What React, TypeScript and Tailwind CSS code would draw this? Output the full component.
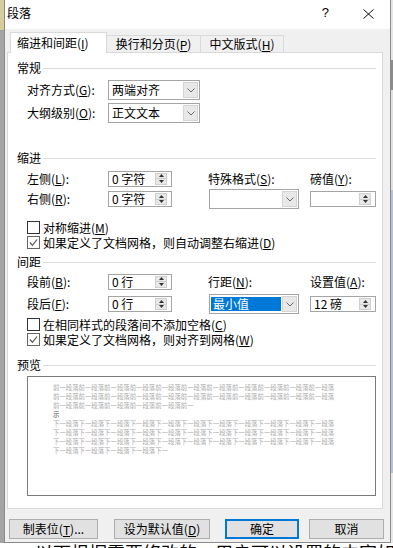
import React from "react";

const U = ({ k }: { k: string }) => (
  <>
    (<span className="underline inline-block leading-[13px]">{k}</span>)
  </>
);

function Chevron() {
  return (
    <svg width="8" height="5" viewBox="0 0 8 5">
      <polyline points="0.5,0.5 4,4 7.5,0.5" fill="none" stroke="#6a6a6a" strokeWidth="1" />
    </svg>
  );
}

function Header({ text, cls }: { text: string; cls: string }) {
  return (
    <div className={"flex items-center h-[14px] pl-[9px] pr-[6px] " + cls}>
      <span className="text-[12px] leading-[14px]">{text}</span>
      <div className="flex-1 h-px bg-[#dcdcdc] ml-[2px]" />
    </div>
  );
}

function Select({ w, value, highlight }: { w: string; value?: string; highlight?: boolean }) {
  return (
    <div className={w + " h-[20px] border border-[#a5a5a5] bg-white flex items-stretch"}>
      <div className="flex-1 flex items-center pl-[1px] pr-[1px]">
        {highlight ? (
          <div className="w-full h-[14px] bg-[#0078d7] text-white text-[12px] leading-[14px] pl-[2px]">{value}</div>
        ) : (
          <span className="text-[12px] leading-[14px] pl-[2px]">{value}</span>
        )}
      </div>
      <div className="w-[15px] my-[1px] mr-[1px] bg-[#e8e8e8] border border-[#d4d4d4] flex items-center justify-center">
        <Chevron />
      </div>
    </div>
  );
}

function Spin({ w, value }: { w: string; value?: string }) {
  return (
    <div className={w + " h-[16px] border border-[#a5a5a5] bg-white flex items-stretch"}>
      <div className="flex-1 flex items-center pl-[3px] text-[12px] leading-[14px] whitespace-pre">{value}</div>
      <div className="w-[12px] my-[1px] mr-[4px] flex flex-col bg-[#e8e8e8] border border-[#cfcfcf]">
        <div className="flex-1 flex items-center justify-center border-b border-[#cfcfcf]">
          <svg width="5" height="3" viewBox="0 0 5 3">
            <polygon points="0,3 2.5,0 5,3" fill="#333" />
          </svg>
        </div>
        <div className="flex-1 flex items-center justify-center">
          <svg width="5" height="3" viewBox="0 0 5 3">
            <polygon points="0,0 5,0 2.5,3" fill="#333" />
          </svg>
        </div>
      </div>
    </div>
  );
}

function CB({ checked, cls, children }: { checked?: boolean; cls: string; children: React.ReactNode }) {
  return (
    <div className={"flex items-center h-[13px] pl-[19px] " + cls}>
      <div
        className={
          "w-[13px] h-[13px] border bg-white flex items-center justify-center " +
          (checked ? "border-[#666666]" : "border-[#333333]")
        }
      >
        {checked && (
          <svg width="9" height="9" viewBox="0 0 9 9">
            <polyline points="1,4.5 3.5,7.3 8,1.5" fill="none" stroke="#555" strokeWidth="1.2" />
          </svg>
        )}
      </div>
      <span className="ml-[3px] inline-block h-[13px] text-[12px] leading-[13px] whitespace-nowrap">{children}</span>
    </div>
  );
}

function Label({ w, children }: { w: string; children: React.ReactNode }) {
  return <div className={w + " text-[12px] leading-[14px] whitespace-nowrap"}>{children}</div>;
}

const prev = "前一段落".repeat(40);
const next = "下一段落".repeat(40);
const prevLines = [prev.slice(0, 44), prev.slice(44, 88), prev.slice(88, 110)];
const nextLines = [next.slice(0, 44), next.slice(44, 88), next.slice(88, 132), next.slice(132, 150)];

export default function App() {
  return (
    <div className="w-[393px] h-[548px] overflow-hidden flex flex-col bg-white text-black font-['Noto_Sans_CJK_SC',sans-serif]">
      <div className="flex h-[543px]">
        <div className="w-[4px] flex flex-col">
          <div className="h-[30px] bg-[#d6cc9c]" />
          <div className="flex-1 bg-[#a4a4a4]" />
        </div>
        <div className="w-[387px] border-x border-b border-[#8a8a8a] bg-[#f0f0f0] flex flex-col">
          {/* title bar */}
          <div className="h-[29px] bg-white flex items-start pl-[2px] pt-[5px]">
            <span className="text-[12px] leading-[16px]">段落</span>
            <div className="flex-1" />
            <span className="font-['Liberation_Sans',sans-serif] text-[13px] leading-[16px] mr-[34px]">?</span>
            <div className="mt-[4px] mr-[16px]">
              <svg width="11" height="10" viewBox="0 0 11 10">
                <line x1="0.5" y1="0.5" x2="10.5" y2="9.5" stroke="#111" strokeWidth="1" />
                <line x1="10.5" y1="0.5" x2="0.5" y2="9.5" stroke="#111" strokeWidth="1" />
              </svg>
            </div>
          </div>
          {/* tabs */}
          <div className="h-[23px] flex items-end pl-[5px]">
            <div className="relative z-10 -mb-px w-[97px] h-[21px] bg-white border-t border-x border-[#d9d9d9] flex items-center pl-[6px] text-[12px] leading-[14px]">
              缩进和间距<U k="I" />
            </div>
            <div className="w-[94px] h-[17px] border-t border-r border-[#d9d9d9] flex items-center justify-center text-[12px] leading-[14px]">
              换行和分页<U k="P" />
            </div>
            <div className="w-[83px] h-[17px] border-t border-r border-[#d9d9d9] flex items-center justify-center text-[12px] leading-[14px]">
              中文版式<U k="H" />
            </div>
          </div>
          {/* panel */}
          <div className="ml-[2px] w-[376px] h-[457px] bg-white border border-[#d9d9d9] flex flex-col">
            <Header text="常规" cls="mt-[8px]" />
            <div className="flex items-center h-[20px] pl-[19px] mt-[5px]">
              <Label w="w-[81px]">
                对齐方式<U k="G" />:
              </Label>
              <Select w="w-[92px]" value="两端对齐" />
            </div>
            <div className="flex items-center h-[20px] pl-[19px] mt-[3px]">
              <Label w="w-[81px]">
                大纲级别<U k="O" />:
              </Label>
              <Select w="w-[92px]" value="正文文本" />
            </div>

            <Header text="缩进" cls="mt-[28px]" />
            <div className="flex items-center h-[17px] pl-[19px] mt-[5px]">
              <Label w="w-[81px]">
                左侧<U k="L" />:
              </Label>
              <Spin w="w-[64px]" value="0 字符" />
              <div className="w-[36px]" />
              <Label w="w-[102px]">
                特殊格式<U k="S" />:
              </Label>
              <Label w="w-[60px]">
                磅值<U k="Y" />:
              </Label>
            </div>
            <div className="flex items-center h-[20px] pl-[19px] mt-[2px]">
              <Label w="w-[81px]">
                右侧<U k="R" />:
              </Label>
              <Spin w="w-[64px]" value="0 字符" />
              <div className="w-[37px]" />
              <Select w="w-[90px]" />
              <div className="w-[11px]" />
              <Spin w="w-[66px]" />
            </div>
            <CB cls="mt-[12px]">
              对称缩进<U k="M" />
            </CB>
            <CB checked cls="mt-[2px]">
              如果定义了文档网格，则自动调整右缩进<U k="D" />
            </CB>

            <Header text="间距" cls="mt-[6px]" />
            <div className="flex items-center h-[17px] pl-[19px] mt-[4px]">
              <Label w="w-[81px]">
                段前<U k="B" />:
              </Label>
              <Spin w="w-[64px]" value="0 行" />
              <div className="w-[36px]" />
              <Label w="w-[102px]">
                行距<U k="N" />:
              </Label>
              <Label w="w-[64px]">
                设置值<U k="A" />:
              </Label>
            </div>
            <div className="flex items-center h-[20px] pl-[19px] mt-[4px]">
              <Label w="w-[81px]">
                段后<U k="F" />:
              </Label>
              <Spin w="w-[64px]" value="0 行" />
              <div className="w-[37px]" />
              <Select w="w-[90px]" value="最小值" highlight />
              <div className="w-[11px]" />
              <Spin w="w-[66px]" value="12 磅" />
            </div>
            <CB cls="mt-[4px]">
              在相同样式的段落间不添加空格<U k="C" />
            </CB>
            <CB checked cls="mt-[2px]">
              如果定义了文档网格，则对齐到网格<U k="W" />
            </CB>

            <Header text="预览" cls="mt-[12px]" />
            <div className="ml-[19px] mt-[4px] w-[349px] h-[120px] border border-[#7a7a7a] bg-white pt-[6px] pl-[25px] overflow-hidden">
              {prevLines.map((l, i) => (
                <div key={"p" + i} className="text-[6.4px] leading-[9px] h-[9px] whitespace-nowrap text-[#ababab]">
                  {l}
                </div>
              ))}
              <div className="text-[6.4px] leading-[9px] h-[9px] whitespace-nowrap text-[#444444]">示</div>
              {nextLines.map((l, i) => (
                <div key={"n" + i} className="text-[6.4px] leading-[9px] h-[9px] whitespace-nowrap text-[#ababab]">
                  {l}
                </div>
              ))}
            </div>
          </div>
          {/* buttons */}
          <div className="flex mt-[10px] h-[20px]">
            <div className="ml-[4px] w-[89px] h-[20px] bg-[#e1e1e1] border border-[#adadad] flex items-center justify-center text-[12px] leading-[14px]">
              制表位<U k="T" />...
            </div>
            <div className="ml-[16px] w-[96px] h-[20px] bg-[#e1e1e1] border border-[#adadad] flex items-center justify-center text-[12px] leading-[14px]">
              设为默认值<U k="D" />
            </div>
            <div className="ml-[15px] w-[74px] h-[20px] bg-[#e1e1e1] border-2 border-[#0078d7] flex items-center justify-center text-[12px] leading-[14px]">
              确定
            </div>
            <div className="ml-[10px] w-[75px] h-[20px] bg-[#e1e1e1] border border-[#adadad] flex items-center justify-center text-[12px] leading-[14px]">
              取消
            </div>
          </div>
        </div>
        <div className="flex-1 flex flex-col">
          <div className="h-[60px] bg-[#e6e6e6]" />
          <div className="h-[30px] bg-[#8c8c8c]" />
          <div className="h-[100px] bg-[#e0e0e0]" />
          <div className="flex-1 bg-[#b6c3d4]" />
          <div className="h-[70px] bg-[#e8e8e8]" />
        </div>
      </div>
      <div className="h-[5px] overflow-hidden pl-[35px]">
        <div className="text-[18px] leading-[18px] whitespace-nowrap text-black">以下根据需要修改的，用户可以设置的内容如下</div>
      </div>
    </div>
  );
}
